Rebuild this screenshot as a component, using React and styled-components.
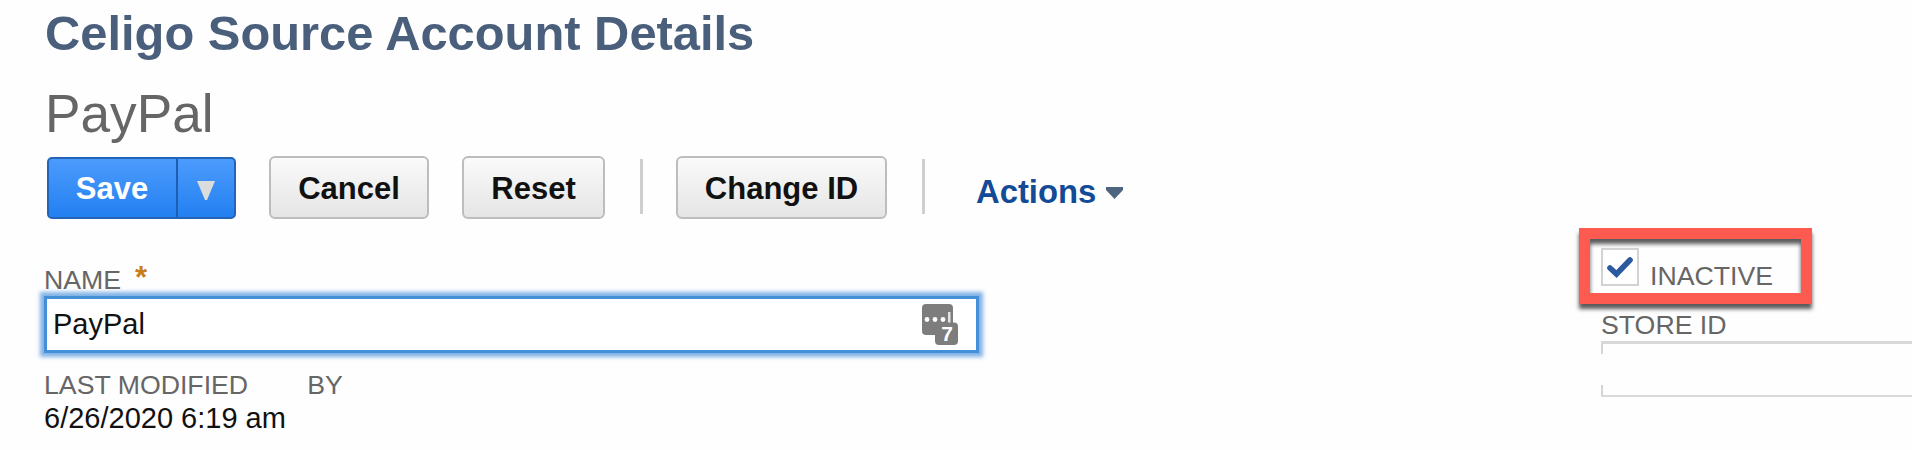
import styled, { createGlobalStyle } from "styled-components";

export default function App() {
  return (
    <>
      <GlobalStyle />
      <Page>
        <Title>Celigo Source Account Details</Title>
        <RecordName>PayPal</RecordName>

        <Toolbar>
          <SplitButton>
            <SaveButton>Save</SaveButton>
            <SaveMenuButton aria-label="More save options">
              <svg width="18" height="19" viewBox="0 0 18 19">
                <path d="M0 0H18L10 19H8Z" fill="#dcdcdc" />
              </svg>
            </SaveMenuButton>
          </SplitButton>
          <Button $width={160}>Cancel</Button>
          <Button $width={143}>Reset</Button>
          <Separator />
          <Button $width={211}>Change ID</Button>
          <Separator />
          <ActionsMenu>
            Actions
            <svg width="17" height="12" viewBox="0 0 17 12">
              <path d="M0 0H17V3L8.5 12L0 3Z" fill="#4d6580" />
            </svg>
          </ActionsMenu>
        </Toolbar>

        <Form>
          <MainColumn>
            <LabelRow>
              <Label>NAME</Label>
              <Required>*</Required>
            </LabelRow>
            <NameField>
              <NameInput defaultValue="PayPal" />
              <PasswordIcon />
            </NameField>
            <MetaRow>
              <Label>LAST MODIFIED</Label>
              <Label>BY</Label>
            </MetaRow>
            <MetaValue>6/26/2020 6:19 am</MetaValue>
          </MainColumn>

          <SideColumn>
            <Highlight>
              <Checkbox>
                <svg width="28" height="24" viewBox="0 0 28 24">
                  <path
                    d="M4 13L10.5 19L24 5"
                    fill="none"
                    stroke="#2b5aa0"
                    strokeWidth="5.6"
                    strokeLinecap="round"
                  />
                </svg>
              </Checkbox>
              <InactiveLabel>INACTIVE</InactiveLabel>
            </Highlight>
            <StoreLabel>STORE ID</StoreLabel>
            <StoreField>
              <StoreEdge />
              <StoreEdge />
            </StoreField>
          </SideColumn>
        </Form>
      </Page>
    </>
  );
}

function PasswordIcon() {
  return (
    <svg width="36" height="41" viewBox="0 0 36 41">
      <rect x="0" y="0" width="31" height="31" rx="4" fill="#7d7d7d" />
      <circle cx="5" cy="15.5" r="2.4" fill="#fff" />
      <circle cx="13" cy="15.5" r="2.4" fill="#fff" />
      <circle cx="21" cy="15.5" r="2.4" fill="#fff" />
      <rect x="26" y="8" width="2.5" height="11" fill="#e4e4e4" />
      <rect x="13" y="18.5" width="23" height="22.5" rx="4" fill="#7d7d7d" />
      <text
        x="25"
        y="37"
        textAnchor="middle"
        fontFamily="Liberation Sans, Arial, sans-serif"
        fontSize="21"
        fontWeight="bold"
        fill="#fff"
      >
        7
      </text>
    </svg>
  );
}

// Styled components
const GlobalStyle = createGlobalStyle`
  * {
    box-sizing: border-box;
  }

  body {
    margin: 0;
    background: #fefefe;
    font-family: "Liberation Sans", Arial, Helvetica, sans-serif;
    overflow: hidden;
  }
`;

const Page = styled.main`
  height: 450px;
  padding: 5px 0 0 44px;
  overflow: hidden;
`;

const Title = styled.h1`
  margin: 0 0 0 1px;
  color: #4a5f7b;
  font-size: 48.85px;
  line-height: 56px;
`;

const RecordName = styled.h2`
  margin: 23px 0 12px 1px;
  color: #666;
  font-size: 53.2px;
  font-weight: normal;
  line-height: 60px;
`;

const Toolbar = styled.div`
  display: flex;
  align-items: center;
  height: 63px;
`;

const SplitButton = styled.div`
  display: flex;
  width: 189px;
  height: 62px;
  margin-left: 3px;
  border: 2px solid #2465b8;
  border-radius: 5px;
  background: linear-gradient(#4c9bfd, #2380f0);
`;

const SaveButton = styled.button`
  width: 129px;
  padding: 3px 1px 0 0;
  border: 0;
  border-right: 2px solid #1d5eb3;
  background: none;
  color: #fff;
  font: bold 31px "Liberation Sans", Arial, sans-serif;
`;

const SaveMenuButton = styled.button`
  display: flex;
  flex: 1;
  align-items: center;
  justify-content: center;
  padding: 5px 0 0;
  border: 0;
  background: none;
`;

const Button = styled.button`
  width: ${({ $width }) => $width}px;
  height: 63px;
  margin-left: 33px;
  padding: 2px 0 0;
  border: 2px solid #bdbdbd;
  border-radius: 6px;
  background: linear-gradient(#fafafa, #e5e5e5);
  color: #111;
  font: bold 31px "Liberation Sans", Arial, sans-serif;
`;

const Separator = styled.span`
  width: 3px;
  height: 55px;
  margin: 0 0 2px 35px;
  background: #cfcfcf;
`;

const ActionsMenu = styled.div`
  display: flex;
  align-items: center;
  gap: 10px;
  margin: 8px 0 0 51px;
  color: #134b96;
  font-size: 32.8px;
  font-weight: bold;
  line-height: 36px;

  svg {
    margin-top: 3px;
  }
`;

const Form = styled.div`
  display: grid;
  grid-template-columns: 1535px 1fr;
  margin-top: 9px;
`;

const MainColumn = styled.section`
  padding-top: 37px;
`;

const SideColumn = styled.section`
  min-width: 0;
`;

const LabelRow = styled.div`
  display: flex;
  height: 31px;
`;

const Label = styled.span`
  color: #666;
  font-size: 26.7px;
  line-height: 30px;
`;

const Required = styled.span`
  margin-left: 14px;
  color: #c9801a;
  font-size: 31px;
  font-weight: bold;
  line-height: 25px;
`;

const NameField = styled.div`
  display: flex;
  align-items: center;
  width: 935px;
  height: 57px;
  padding-right: 18px;
  border: 3px solid #4390d8;
  background: #fff;
  box-shadow: 0 0 4px 4px rgba(74, 146, 220, 0.7);
`;

const NameInput = styled.input`
  flex: 1;
  min-width: 0;
  height: 100%;
  padding: 0 0 0 6px;
  border: 0;
  outline: 0;
  background: none;
  color: #111;
  font: 29px "Liberation Sans", Arial, sans-serif;
`;

const MetaRow = styled.div`
  display: flex;
  gap: 59px;
  margin-top: 17px;
`;

const MetaValue = styled.div`
  margin-top: 2px;
  color: #111;
  font-size: 29px;
  line-height: 32px;
`;

const Highlight = styled.div`
  display: flex;
  width: 233px;
  height: 76px;
  padding: 9px 0 0 11px;
  border: 11px solid #fd5a50;
  box-shadow:
    0 5px 4px rgba(0, 0, 0, 0.65),
    inset 0 5px 4px rgba(0, 0, 0, 0.65);
`;

const Checkbox = styled.span`
  display: flex;
  align-items: center;
  justify-content: center;
  width: 38px;
  height: 38px;
  border: 2px solid #d2d2d2;
  background: #fff;
`;

const InactiveLabel = styled(Label)`
  margin: 13px 0 0 11px;
`;

const StoreLabel = styled(Label)`
  display: block;
  margin: 6px 0 0 22px;
`;

const StoreField = styled.div`
  display: flex;
  flex-direction: column;
  justify-content: space-between;
  height: 56px;
  margin: 1px 0 0 22px;
  border: solid #d8d8d8;
  border-width: 3px 0 2px;
`;

const StoreEdge = styled.span`
  width: 2px;
  height: 10px;
  background: #d4d4d4;
`;
